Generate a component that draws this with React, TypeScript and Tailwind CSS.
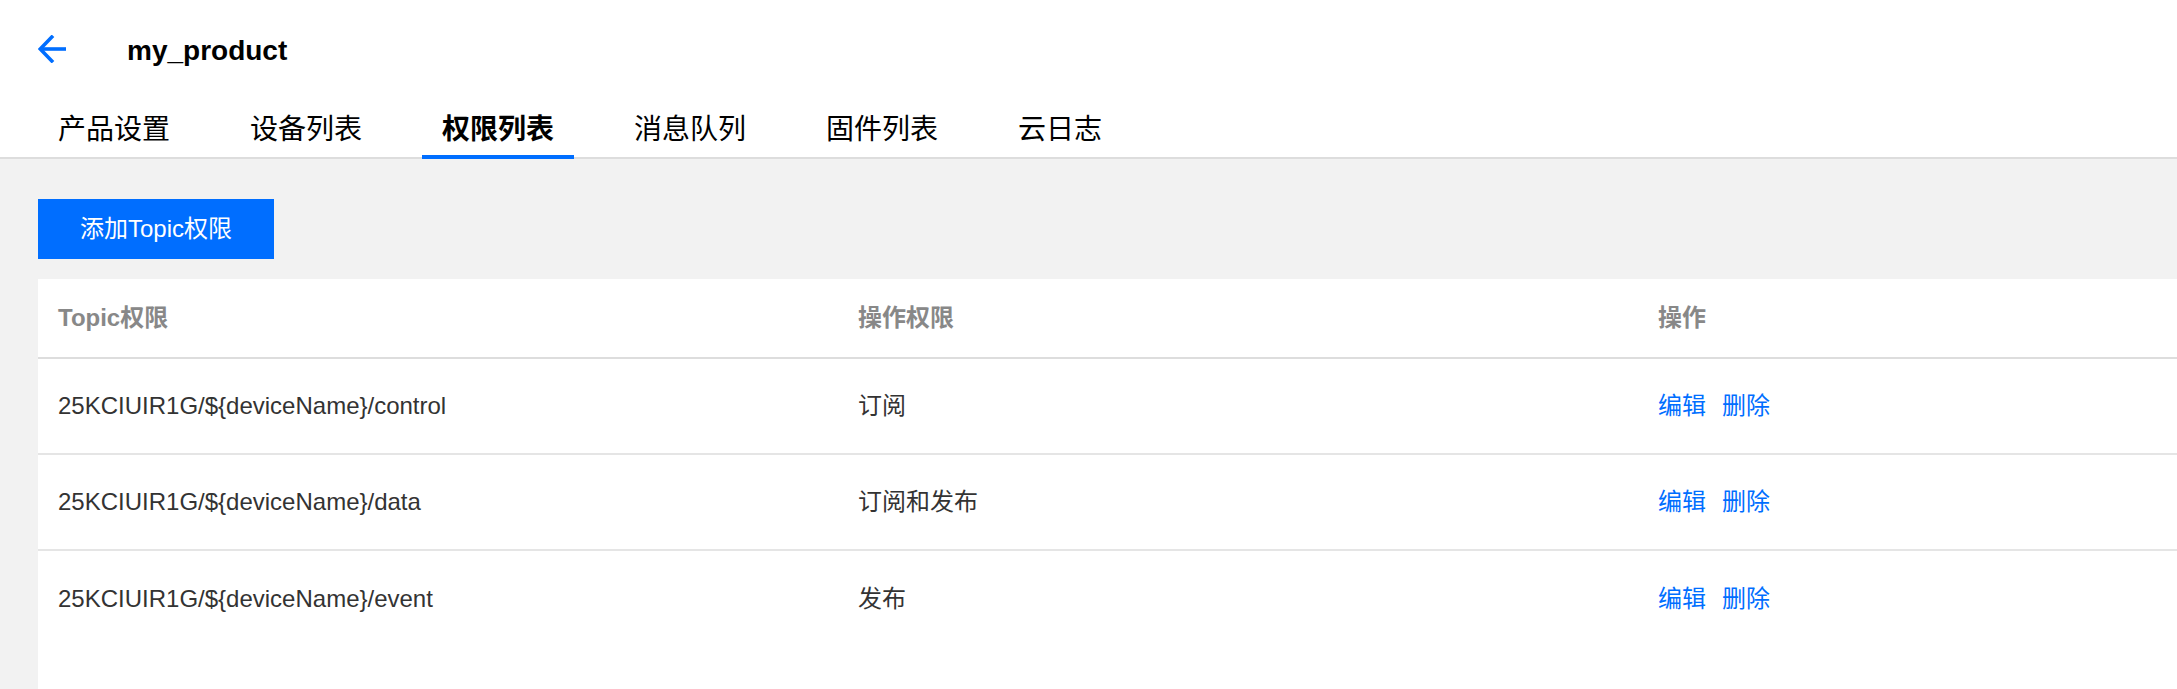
import React from "react";

const tabs = ["产品设置", "设备列表", "权限列表", "消息队列", "固件列表", "云日志"];

const rows = [
  { topic: "25KCIUIR1G/${deviceName}/control", perm: "订阅" },
  { topic: "25KCIUIR1G/${deviceName}/data", perm: "订阅和发布" },
  { topic: "25KCIUIR1G/${deviceName}/event", perm: "发布" },
];

export default function App() {
  return (
    <div className="min-h-screen flex flex-col bg-[#f2f2f2] font-['Liberation_Sans','Noto_Sans_CJK_SC',sans-serif]">
      <header className="bg-white border-b-2 border-[#dddddd]">
        <div className="flex items-center h-[28px] mt-[35px] pl-[38px]">
          <svg width="28" height="28" viewBox="0 0 28 28" fill="none" stroke="#006eff" strokeWidth="3.6">
            <path d="M15 0.8 L2.2 14 L15 27.2" strokeLinejoin="miter" />
            <path d="M2.5 14 H28" />
          </svg>
          <span className="ml-[61px] pt-[3px] text-[28px] leading-[28px] font-bold text-black">my_product</span>
        </div>
        <nav className="flex gap-[40px] pl-[38px] mt-[37px]">
          {tabs.map((t, i) => (
            <div
              key={t}
              className={
                "relative h-[57px] px-[20px] flex items-center text-[28px] leading-none text-black " +
                (i === 2 ? "font-bold" : "")
              }
            >
              <span className="pt-[2px]">{t}</span>
              {i === 2 && <div className="absolute left-0 right-0 -bottom-[2px] h-[4px] bg-[#006eff]" />}
            </div>
          ))}
        </nav>
      </header>

      <main className="flex-1 flex flex-col pl-[38px] pt-[40px]">
        <div>
          <button className="h-[60px] px-[42px] bg-[#006eff] text-white text-[24px] leading-none">
            添加Topic权限
          </button>
        </div>
        <div className="flex-1 mt-[20px] bg-white">
          <div className="grid grid-cols-[800px_800px_1fr] h-[80px] items-center border-b-2 border-[#dddddd] text-[24px] font-bold text-[#888888]">
            <div className="px-[20px]">Topic权限</div>
            <div className="px-[20px]">操作权限</div>
            <div className="px-[20px]">操作</div>
          </div>
          {rows.map((r, i) => (
            <div
              key={r.topic}
              className={
                "grid grid-cols-[800px_800px_1fr] h-[96px] items-center text-[24px] text-[#333333] " +
                (i < rows.length - 1 ? "border-b-2 border-[#e5e5e5]" : "")
              }
            >
              <div className="px-[20px]">{r.topic}</div>
              <div className="px-[20px]">{r.perm}</div>
              <div className="px-[20px] flex gap-[16px] text-[#006eff]">
                <span>编辑</span>
                <span>删除</span>
              </div>
            </div>
          ))}
        </div>
      </main>
    </div>
  );
}
